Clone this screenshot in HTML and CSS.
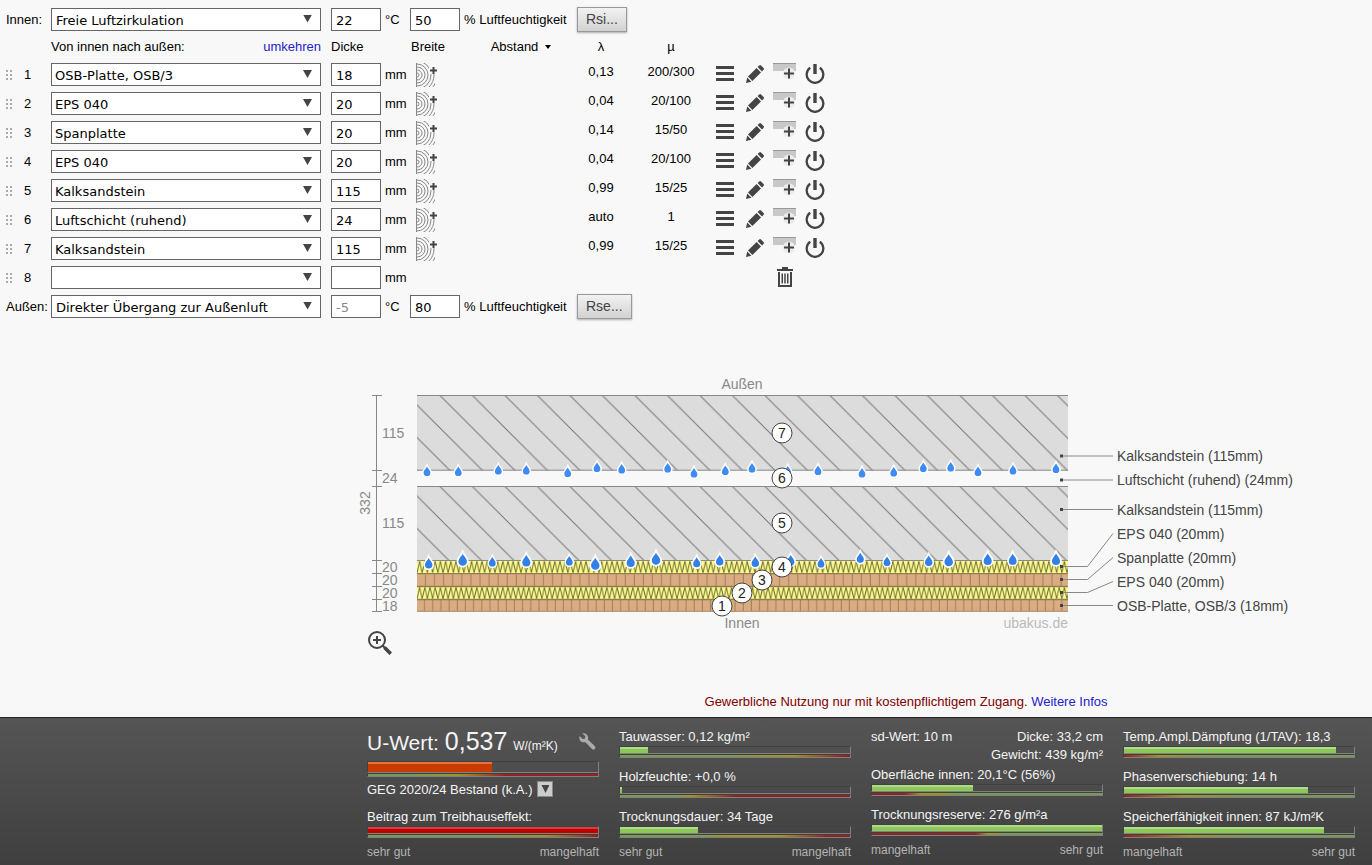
FILE: index.html
```html
<!DOCTYPE html>
<html lang="de">
<head>
    <meta charset="UTF-8">
    <meta name="viewport" content="width=device-width, initial-scale=1.0">
    <title>U-Wert-Rechner</title>
    <link rel="stylesheet" href="styles.css">
</head>
<body>
    <!-- Icon sprites -->
    <svg class="sprites" aria-hidden="true">
        <symbol id="i-grip" viewBox="0 0 6 10"><path d="M0 0h2v2H0zM4 0h2v2H4zM0 4h2v2H0zM4 4h2v2H4zM0 8h2v2H0zM4 8h2v2H4z"/></symbol>
        <symbol id="i-menu" viewBox="0 0 18 16"><path d="M0 0h18v3H0zM0 6h18v3H0zM0 12h18v3H0z"/></symbol>
        <symbol id="i-pen" viewBox="0 0 18 18"><path d="M0 18l1.2-5.4 4.2 4.2zM2 11.6L10.6 3l4.4 4.4L6.4 16zM11.6 2l1.6-1.6q.9-.8 1.8 0l2.6 2.6q.8.9 0 1.8L16 6.4z"/></symbol>
        <symbol id="i-insert" viewBox="0 0 24 22">
            <path fill="#c8c8c8" d="M0 1h23v7H0z"/><path fill="#999" d="M0 0h23v1H0z"/>
            <circle cx="16" cy="10.500" r="6" fill="#ececec"/><path d="M15 5.500h2v4h4v2h-4v4h-2v-4h-4v-2h4z"/>
        </symbol>
        <symbol id="i-power" viewBox="0 0 20 20"><path d="M8.300 0h3.400v10H8.300z"/><path fill="none" stroke="#444" stroke-width="2.300" d="M5.200 3.800a8.300 8.300 0 1 0 9.600 0"/></symbol>
        <symbol id="i-trash" viewBox="0 0 16 20"><path d="M0 2h5V0h6v2h5v2H0z"/><path fill="none" stroke="#444" stroke-width="2" d="M2 5v14h12V5"/><path d="M4.500 6.500h1.500v10H4.500zM7.250 6.500h1.500v10h-1.500zM10 6.500h1.500v10H10z"/></symbol>
        <symbol id="i-wood" viewBox="0 0 22 24">
            <clipPath id="wood-clip"><path d="M0 0h13v11h6v13H0z"/></clipPath>
            <g fill="none" stroke="#888" clip-path="url(#wood-clip)">
                <path d="M.5 0v24"/><circle cx="1" cy="12" r="2"/><circle cx="1" cy="12" r="5"/><circle cx="1" cy="12" r="8"/><circle cx="1" cy="12" r="11"/><circle cx="1" cy="12" r="14"/><circle cx="1" cy="12" r="17"/><circle cx="1" cy="12" r="20"/>
            </g>
            <path d="M16.500 4h2v2.500H21v2h-2.500V11h-2V8.500H14v-2h2.500z"/>
        </symbol>
        <symbol id="i-zoom" viewBox="0 0 24 24"><g fill="none" stroke="#444"><circle cx="9" cy="9" r="8" stroke-width="2"/><path stroke-width="2" d="M9 5v8M5 9h8"/><path stroke-width="2" d="M14.500 14.500l2.500 2.500"/><path stroke-width="3.600" d="M16.500 16.500l6.300 6.300"/></g></symbol>
        <symbol id="i-wrench" viewBox="0 0 17 17"><path d="M3.400.4l2.900 2.900-.4 2.200-2.200.5L.7 3C-.2 5.300.5 7.600 2.300 8.700c1.300.8 2.700.8 3.800.4l6.900 7c2 1.700 4.500-.8 2.900-2.900l-7-6.800c.5-1.300.3-2.900-.6-4.200C7.200.4 5.300-.2 3.400.400z"/></symbol>
    </svg>

    <main>
        <!-- Layer editor -->
        <form class="editor">
            <div class="climate">
                <label class="climate-label" for="innen">Innen:</label>
                <span class="drop"><select id="innen"><option>Freie Luftzirkulation</option></select></span>
                <input class="num" type="text" value="22" id="innenTemp"><label class="unit" for="innenTemp">°C</label>
                <input class="num" type="text" value="50" id="innenRh"><label class="unit humidity" for="innenRh">% Luftfeuchtigkeit</label>
                <button type="button" class="btn">Rsi...</button>
            </div>

            <table class="layers">
                <colgroup>
                    <col class="c-grip"><col class="c-no"><col class="c-material"><col class="c-thick"><col class="c-width"><col class="c-dist"><col class="c-lambda"><col class="c-mu"><col class="c-actions">
                </colgroup>
                <thead>
                    <tr>
                        <th></th><th></th>
                        <th><div class="head-material"><span>Von innen nach außen:</span><a href="#">umkehren</a></div></th>
                        <th>Dicke</th>
                        <th>Breite</th>
                        <th class="mid"><button type="button" class="sort">Abstand</button></th>
                        <th class="mid">λ</th>
                        <th class="mid">µ</th>
                        <th></th>
                    </tr>
                </thead>
                <tbody>
                    <tr>
                        <td><svg class="grip"><use href="#i-grip"/></svg></td><td class="no">1</td>
                        <td><span class="drop"><select aria-label="Schicht 1"><option>OSB-Platte, OSB/3</option></select></span></td>
                        <td><input class="num" type="text" value="18" id="d1"><label class="unit" for="d1">mm</label></td>
                        <td><button type="button" class="icon-btn" aria-label="Breite"><svg class="wood"><use href="#i-wood"/></svg></button></td><td></td>
                        <td class="val">0,13</td><td class="val">200/300</td>
                        <td><div class="actions">
                            <button type="button" class="icon-btn" aria-label="Menü"><svg class="menu"><use href="#i-menu"/></svg></button>
                            <button type="button" class="icon-btn" aria-label="Bearbeiten"><svg class="pen"><use href="#i-pen"/></svg></button>
                            <button type="button" class="icon-btn" aria-label="Einfügen"><svg class="insert"><use href="#i-insert"/></svg></button>
                            <button type="button" class="icon-btn" aria-label="Ein/Aus"><svg class="power"><use href="#i-power"/></svg></button>
                        </div></td>
                    </tr>
                    <tr>
                        <td><svg class="grip"><use href="#i-grip"/></svg></td><td class="no">2</td>
                        <td><span class="drop"><select aria-label="Schicht 2"><option>EPS 040</option></select></span></td>
                        <td><input class="num" type="text" value="20" id="d2"><label class="unit" for="d2">mm</label></td>
                        <td><button type="button" class="icon-btn" aria-label="Breite"><svg class="wood"><use href="#i-wood"/></svg></button></td><td></td>
                        <td class="val">0,04</td><td class="val">20/100</td>
                        <td><div class="actions">
                            <button type="button" class="icon-btn" aria-label="Menü"><svg class="menu"><use href="#i-menu"/></svg></button>
                            <button type="button" class="icon-btn" aria-label="Bearbeiten"><svg class="pen"><use href="#i-pen"/></svg></button>
                            <button type="button" class="icon-btn" aria-label="Einfügen"><svg class="insert"><use href="#i-insert"/></svg></button>
                            <button type="button" class="icon-btn" aria-label="Ein/Aus"><svg class="power"><use href="#i-power"/></svg></button>
                        </div></td>
                    </tr>
                    <tr>
                        <td><svg class="grip"><use href="#i-grip"/></svg></td><td class="no">3</td>
                        <td><span class="drop"><select aria-label="Schicht 3"><option>Spanplatte</option></select></span></td>
                        <td><input class="num" type="text" value="20" id="d3"><label class="unit" for="d3">mm</label></td>
                        <td><button type="button" class="icon-btn" aria-label="Breite"><svg class="wood"><use href="#i-wood"/></svg></button></td><td></td>
                        <td class="val">0,14</td><td class="val">15/50</td>
                        <td><div class="actions">
                            <button type="button" class="icon-btn" aria-label="Menü"><svg class="menu"><use href="#i-menu"/></svg></button>
                            <button type="button" class="icon-btn" aria-label="Bearbeiten"><svg class="pen"><use href="#i-pen"/></svg></button>
                            <button type="button" class="icon-btn" aria-label="Einfügen"><svg class="insert"><use href="#i-insert"/></svg></button>
                            <button type="button" class="icon-btn" aria-label="Ein/Aus"><svg class="power"><use href="#i-power"/></svg></button>
                        </div></td>
                    </tr>
                    <tr>
                        <td><svg class="grip"><use href="#i-grip"/></svg></td><td class="no">4</td>
                        <td><span class="drop"><select aria-label="Schicht 4"><option>EPS 040</option></select></span></td>
                        <td><input class="num" type="text" value="20" id="d4"><label class="unit" for="d4">mm</label></td>
                        <td><button type="button" class="icon-btn" aria-label="Breite"><svg class="wood"><use href="#i-wood"/></svg></button></td><td></td>
                        <td class="val">0,04</td><td class="val">20/100</td>
                        <td><div class="actions">
                            <button type="button" class="icon-btn" aria-label="Menü"><svg class="menu"><use href="#i-menu"/></svg></button>
                            <button type="button" class="icon-btn" aria-label="Bearbeiten"><svg class="pen"><use href="#i-pen"/></svg></button>
                            <button type="button" class="icon-btn" aria-label="Einfügen"><svg class="insert"><use href="#i-insert"/></svg></button>
                            <button type="button" class="icon-btn" aria-label="Ein/Aus"><svg class="power"><use href="#i-power"/></svg></button>
                        </div></td>
                    </tr>
                    <tr>
                        <td><svg class="grip"><use href="#i-grip"/></svg></td><td class="no">5</td>
                        <td><span class="drop"><select aria-label="Schicht 5"><option>Kalksandstein</option></select></span></td>
                        <td><input class="num" type="text" value="115" id="d5"><label class="unit" for="d5">mm</label></td>
                        <td><button type="button" class="icon-btn" aria-label="Breite"><svg class="wood"><use href="#i-wood"/></svg></button></td><td></td>
                        <td class="val">0,99</td><td class="val">15/25</td>
                        <td><div class="actions">
                            <button type="button" class="icon-btn" aria-label="Menü"><svg class="menu"><use href="#i-menu"/></svg></button>
                            <button type="button" class="icon-btn" aria-label="Bearbeiten"><svg class="pen"><use href="#i-pen"/></svg></button>
                            <button type="button" class="icon-btn" aria-label="Einfügen"><svg class="insert"><use href="#i-insert"/></svg></button>
                            <button type="button" class="icon-btn" aria-label="Ein/Aus"><svg class="power"><use href="#i-power"/></svg></button>
                        </div></td>
                    </tr>
                    <tr>
                        <td><svg class="grip"><use href="#i-grip"/></svg></td><td class="no">6</td>
                        <td><span class="drop"><select aria-label="Schicht 6"><option>Luftschicht (ruhend)</option></select></span></td>
                        <td><input class="num" type="text" value="24" id="d6"><label class="unit" for="d6">mm</label></td>
                        <td><button type="button" class="icon-btn" aria-label="Breite"><svg class="wood"><use href="#i-wood"/></svg></button></td><td></td>
                        <td class="val">auto</td><td class="val">1</td>
                        <td><div class="actions">
                            <button type="button" class="icon-btn" aria-label="Menü"><svg class="menu"><use href="#i-menu"/></svg></button>
                            <button type="button" class="icon-btn" aria-label="Bearbeiten"><svg class="pen"><use href="#i-pen"/></svg></button>
                            <button type="button" class="icon-btn" aria-label="Einfügen"><svg class="insert"><use href="#i-insert"/></svg></button>
                            <button type="button" class="icon-btn" aria-label="Ein/Aus"><svg class="power"><use href="#i-power"/></svg></button>
                        </div></td>
                    </tr>
                    <tr>
                        <td><svg class="grip"><use href="#i-grip"/></svg></td><td class="no">7</td>
                        <td><span class="drop"><select aria-label="Schicht 7"><option>Kalksandstein</option></select></span></td>
                        <td><input class="num" type="text" value="115" id="d7"><label class="unit" for="d7">mm</label></td>
                        <td><button type="button" class="icon-btn" aria-label="Breite"><svg class="wood"><use href="#i-wood"/></svg></button></td><td></td>
                        <td class="val">0,99</td><td class="val">15/25</td>
                        <td><div class="actions">
                            <button type="button" class="icon-btn" aria-label="Menü"><svg class="menu"><use href="#i-menu"/></svg></button>
                            <button type="button" class="icon-btn" aria-label="Bearbeiten"><svg class="pen"><use href="#i-pen"/></svg></button>
                            <button type="button" class="icon-btn" aria-label="Einfügen"><svg class="insert"><use href="#i-insert"/></svg></button>
                            <button type="button" class="icon-btn" aria-label="Ein/Aus"><svg class="power"><use href="#i-power"/></svg></button>
                        </div></td>
                    </tr>
                    <tr>
                        <td><svg class="grip"><use href="#i-grip"/></svg></td><td class="no">8</td>
                        <td><span class="drop"><select aria-label="Schicht 8"><option></option></select></span></td>
                        <td><input class="num" type="text" value="" id="d8"><label class="unit" for="d8">mm</label></td>
                        <td></td><td></td><td></td><td></td>
                        <td><div class="actions"><button type="button" class="icon-btn delete" aria-label="Löschen"><svg class="trash"><use href="#i-trash"/></svg></button></div></td>
                    </tr>
                </tbody>
            </table>

            <div class="climate">
                <label class="climate-label" for="aussen">Außen:</label>
                <span class="drop"><select id="aussen"><option>Direkter Übergang zur Außenluft</option></select></span>
                <input class="num muted" type="text" value="-5" id="aussenTemp"><label class="unit" for="aussenTemp">°C</label>
                <input class="num" type="text" value="80" id="aussenRh"><label class="unit humidity" for="aussenRh">% Luftfeuchtigkeit</label>
                <button type="button" class="btn">Rse...</button>
            </div>
        </form>

        <!-- Cross section of the wall -->
        <section class="section">
            <svg class="wall" viewBox="-61 -24 950 252" role="img" aria-label="Querschnitt">
                <defs>
                    <pattern id="stone" width="32.500" height="32.500" patternUnits="userSpaceOnUse" x="23" y="-.5">
                        <path stroke="#777" d="M-2-2l36.500 36.500M30.500-2l4 4M-2 30.500l4 4"/>
                    </pattern>
                    <pattern id="stone2" width="32.500" height="32.500" patternUnits="userSpaceOnUse" x="23" y="90.500">
                        <path stroke="#777" d="M-2-2l36.500 36.500M30.500-2l4 4M-2 30.500l4 4"/>
                    </pattern>
                    <pattern id="eps" width="5.200" height="13" patternUnits="userSpaceOnUse" x="0" y="164.500">
                        <path fill="none" stroke="#6f6b38" d="M0 12.500L2.600.5l2.600 12"/>
                    </pattern>
                    <pattern id="chip" width="9.080" height="13" patternUnits="userSpaceOnUse" x="0" y="177.500"><path stroke="#a08050" d="M8.500 0v13"/></pattern>
                    <pattern id="osb" width="8.170" height="13" patternUnits="userSpaceOnUse" x="0" y="203.500"><path stroke="#a08050" d="M7.600 0v13"/></pattern>
                    <path id="drop" d="M0-5C1-2.800 3.400-1.200 3.400 1.200a3.400 3.400 0 0 1-6.800 0C-3.400-1.200-1-2.800 0-5z"/>
                </defs>

                <g class="fills">
                    <path fill="#dcdcdc" d="M0-.5h651v75H0zM0 90.500h651v74H0z"/>
                    <path fill="url(#stone)" d="M0-.5h651v75H0z"/>
                    <path fill="url(#stone2)" d="M0 90.500h651v74H0z"/>
                    <path fill="#fbfb8c" d="M0 164.500h651v13H0zM0 190.500h651v13H0z"/>
                    <path fill="url(#eps)" d="M0 164.500h651v13H0zM0 190.500h651v13H0z"/>
                    <path fill="#dbab84" d="M0 177.500h651v13H0zM0 203.500h651v12H0z"/>
                    <path fill="url(#chip)" d="M0 177.500h651v13H0z"/>
                    <path fill="url(#osb)" d="M0 203.500h651v12H0z"/>
                </g>
                <g stroke="#888"><path d="M0-.5h651M0 74.200h651M0 90.500h651M0 164.500h651"/><path stroke="#8f7f50" stroke-width="1.300" d="M0 177.700h651M0 190.500h651M0 203.500h651"/><path stroke="#a98d6c" d="M0 215.300h651"/></g>

                <g class="drops">
                    <use href="#drop" x="10" y="75.500"/><use href="#drop" x="41.300" y="75.500"/><use href="#drop" x="81.300" y="74"/><use href="#drop" x="109.300" y="74"/><use href="#drop" x="150.700" y="76.500"/><use href="#drop" x="180" y="71.500"/><use href="#drop" x="204.700" y="73"/><use href="#drop" x="250.700" y="72"/><use href="#drop" x="277" y="77"/><use href="#drop" x="308.300" y="74.500"/><use href="#drop" x="335" y="72"/><use href="#drop" x="370.700" y="75"/><use href="#drop" x="401" y="74.500"/><use href="#drop" x="445" y="77"/><use href="#drop" x="476.700" y="76"/><use href="#drop" x="506.300" y="71.500"/><use href="#drop" x="533.700" y="71"/><use href="#drop" x="561" y="75.500"/><use href="#drop" x="596" y="74"/><use href="#drop" x="639" y="72.500"/>
                </g>
                <g class="drops wet">
                    <use href="#drop" transform="translate(11.700 167.500) scale(1.100)"/><use href="#drop" transform="translate(45.700 164) scale(1.250)"/><use href="#drop" transform="translate(75.300 166)"/><use href="#drop" transform="translate(109.300 165) scale(1.200)"/><use href="#drop" transform="translate(152.300 165)"/><use href="#drop" transform="translate(178.300 168) scale(1.250)"/><use href="#drop" transform="translate(213.700 165.500) scale(1.200)"/><use href="#drop" transform="translate(239 163) scale(1.250)"/><use href="#drop" transform="translate(279.700 166.500) scale(1.050)"/><use href="#drop" transform="translate(302.700 164.500) scale(1.100)"/><use href="#drop" transform="translate(338.300 166) scale(1.100)"/><use href="#drop" transform="translate(373.700 164.500) scale(1.100)"/><use href="#drop" transform="translate(404 167)"/><use href="#drop" transform="translate(443.300 162) scale(1.050)"/><use href="#drop" transform="translate(470 165.500)"/><use href="#drop" transform="translate(511.700 165) scale(1.100)"/><use href="#drop" transform="translate(531.700 164.500) scale(1.250)"/><use href="#drop" transform="translate(570.700 163.500) scale(1.200)"/><use href="#drop" transform="translate(595.700 163.500) scale(1.150)"/><use href="#drop" transform="translate(639 163.500) scale(1.200)"/>
                </g>

                <!-- dimensions on the left -->
                <path stroke="#888" d="M-40.500-.5v216M-45-.5h10M-45 74.500h10M-45 90.500h10M-45 164.500h10M-45 177.500h10M-45 190.500h10M-45 203.500h10M-45 215.500h10"/>
                <g class="dim">
                    <text x="-35" y="42">115</text><text x="-35" y="87">24</text><text x="-35" y="132">115</text><text x="-35" y="176">20</text><text x="-35" y="189">20</text><text x="-35" y="202">20</text><text x="-35" y="215">18</text>
                    <text class="center" transform="translate(-47 107) rotate(-90)">332</text>
                    <text class="center" x="325" y="-7">Außen</text><text class="center" x="325" y="232">Innen</text>
                    <text class="brand" x="651" y="232">ubakus.de</text>
                </g>

                <g class="badges">
                    <circle cx="365" cy="37" r="10"/><text x="365" y="42">7</text>
                    <circle cx="365" cy="82" r="10"/><text x="365" y="87">6</text>
                    <circle cx="365" cy="127" r="10"/><text x="365" y="132">5</text>
                    <circle cx="365" cy="171" r="10"/><text x="365" y="176">4</text>
                    <circle cx="345" cy="184" r="10"/><text x="345" y="189">3</text>
                    <circle cx="325" cy="197" r="10"/><text x="325" y="202">2</text>
                    <circle cx="305" cy="210" r="10"/><text x="305" y="215">1</text>
                </g>

                <!-- leader lines and layer names -->
                <path class="leader" d="M644 60h52M644 84h52M644 113.500h52M644 170.500h26.500L696 137.500M644 183.500h26.500L696 161.500M644 196.500h26.500L696 185.500M644 209.500h52"/>
                <path d="M643 58.500h3v3h-3zM643 82.500h3v3h-3zM643 112h3v3h-3zM643 169h3v3h-3zM643 182h3v3h-3zM643 195h3v3h-3zM643 208h3v3h-3z" fill="#444"/>
                <g class="names">
                    <text x="700" y="65">Kalksandstein (115mm)</text><text x="700" y="89">Luftschicht (ruhend) (24mm)</text><text x="700" y="119">Kalksandstein (115mm)</text><text x="700" y="143">EPS 040 (20mm)</text><text x="700" y="167">Spanplatte (20mm)</text><text x="700" y="191">EPS 040 (20mm)</text><text x="700" y="215">OSB-Platte, OSB/3 (18mm)</text>
                </g>
            </svg>
            <button type="button" class="icon-btn" aria-label="Vergrößern"><svg class="magnify"><use href="#i-zoom"/></svg></button>
        </section>
    </main>

    <p class="notice">Gewerbliche Nutzung nur mit kostenpflichtigem Zugang. <a href="#">Weitere Infos</a></p>

    <!-- Results -->
    <footer class="results">
        <div class="col">
            <div class="uvalue"><span class="u-label">U-Wert: <b>0,537</b> <small>W/(m²K)</small></span><button type="button" class="icon-btn" aria-label="Einstellungen"><svg class="wrench"><use href="#i-wrench"/></svg></button></div>
            <div class="bar tall"><div class="fill orange" style="width: 54%"></div></div>
            <div class="scale s-uvalue"></div>
            <div class="geg">GEG 2020/24 Bestand (k.A.)<button type="button" class="mini" aria-label="Auswahl"></button></div>
            <div class="metric"><div class="name">Beitrag zum Treibhauseffekt:</div><div class="bar"><div class="fill red" style="width: 100%"></div></div><div class="scale s-co2"></div></div>
            <div class="legend"><span>sehr gut</span><span>mangelhaft</span></div>
        </div>
        <div class="col">
            <div class="metric"><div class="name">Tauwasser: 0,12 kg/m²</div><div class="bar"><div class="fill" style="width: 12%"></div></div><div class="scale s-dew"></div></div>
            <div class="metric"><div class="name">Holzfeuchte: +0,0 %</div><div class="bar"><div class="fill" style="width: 1%"></div></div><div class="scale s-wood"></div></div>
            <div class="metric"><div class="name">Trocknungsdauer: 34 Tage</div><div class="bar"><div class="fill" style="width: 34%"></div></div><div class="scale s-dry"></div></div>
            <div class="legend"><span>sehr gut</span><span>mangelhaft</span></div>
        </div>
        <div class="col">
            <div class="facts"><span>sd-Wert: 10 m</span><span>Dicke: 33,2 cm<br>Gewicht: 439 kg/m²</span></div>
            <div class="metric"><div class="name">Oberfläche innen: 20,1°C (56%)</div><div class="bar"><div class="fill" style="width: 44%"></div></div><div class="scale s-surface"></div></div>
            <div class="metric"><div class="name">Trocknungsreserve: 276 g/m²a</div><div class="bar"><div class="fill" style="width: 100%"></div></div><div class="scale s-reserve"></div></div>
            <div class="legend"><span>mangelhaft</span><span>sehr gut</span></div>
        </div>
        <div class="col">
            <div class="metric"><div class="name">Temp.Ampl.Dämpfung (1/TAV): 18,3</div><div class="bar"><div class="fill" style="width: 92%"></div></div><div class="scale s-tav"></div></div>
            <div class="metric"><div class="name">Phasenverschiebung: 14 h</div><div class="bar"><div class="fill" style="width: 80%"></div></div><div class="scale s-phase"></div></div>
            <div class="metric"><div class="name">Speicherfähigkeit innen: 87 kJ/m²K</div><div class="bar"><div class="fill" style="width: 87%"></div></div><div class="scale s-heat"></div></div>
            <div class="legend"><span>mangelhaft</span><span>sehr gut</span></div>
        </div>
    </footer>
</body>
</html>
```
FILE: styles.css
```css
* {
    box-sizing: border-box;
}

body {
    margin: 0;
    min-height: 100vh;
    display: flex;
    flex-direction: column;
    background: #f8f8f8;
    color: #000;
    font-family: "Liberation Sans", Arial, sans-serif;
    font-size: 13px;
}

a {
    color: #2222cc;
    text-decoration: none;
}

svg {
    display: block;
    fill: #444;
}

.sprites {
    position: absolute;
    width: 0;
    height: 0;
}

.icon-btn {
    padding: 0;
    border: none;
    background: none;
    cursor: pointer;
}

/* Layer editor */
.editor {
    padding: 7px 4px 0;
}

.climate {
    display: flex;
    align-items: center;
    height: 24px;
    padding-left: 2px;
}

.climate-label {
    width: 45px;
}

.drop {
    position: relative;
    display: block;
    width: 270px;
}

.drop::after {
    content: "";
    position: absolute;
    right: 9px;
    top: 7px;
    width: 9px;
    height: 8px;
    background: #444;
    clip-path: polygon(0 0, 100% 0, 50% 100%);
    pointer-events: none;
}

.drop select,
.num {
    display: block;
    height: 23px;
    border: 1px solid #666;
    border-radius: 0;
    background: #fff;
    color: #000;
    font: 13px "DejaVu Sans", Verdana, sans-serif;
    appearance: none;
}

.drop select {
    width: 100%;
    padding: 2px 20px 0 3px;
}

.climate select {
    padding-left: 4px;
}

.num {
    width: 50px;
    padding: 2px 4px 0;
}

.num.muted {
    color: #888;
}

.climate .num {
    margin-left: 10px;
}

.unit {
    padding-left: 4px;
}

.climate .unit {
    width: 19px;
}

.climate .unit.humidity {
    width: 117px;
}

.btn {
    height: 25px;
    padding: 0 8px;
    border: 1px solid #999;
    background: linear-gradient(#f2f2f2, #d2d2d2);
    box-shadow: 0 1px 2px rgba(0, 0, 0, 0.3);
    color: #444;
    font: 14px "Liberation Sans", Arial, sans-serif;
}

.layers {
    width: 826px;
    margin: 3px 0 2px;
    border-collapse: collapse;
    table-layout: fixed;
}

.c-grip { width: 20px; }
.c-no { width: 27px; }
.c-material { width: 280px; }
.c-thick { width: 80px; }
.c-width { width: 61px; }
.c-dist { width: 98px; }
.c-lambda { width: 62px; }
.c-mu { width: 78px; }
.c-actions { width: 120px; }

.layers th {
    height: 26px;
    padding: 0;
    font-weight: normal;
    text-align: left;
    line-height: 26px;
    vertical-align: top;
}

.layers .mid {
    text-align: center;
}

.layers td {
    height: 29px;
    padding: 0;
}

.layers td .num,
.layers td .unit {
    display: inline-block;
    vertical-align: middle;
}

.layers td .icon-btn {
    display: block;
}

.head-material {
    display: flex;
    justify-content: space-between;
    padding-right: 10px;
}

.sort {
    padding: 0;
    border: none;
    background: none;
    font: inherit;
}

.sort::after {
    content: "";
    display: inline-block;
    margin-left: 7px;
    border: 3px solid transparent;
    border-top: 4px solid #000;
    border-bottom: 0;
    vertical-align: 2px;
}

.layers .val {
    line-height: 24px;
    text-align: center;
    vertical-align: top;
}

.grip {
    width: 6px;
    height: 10px;
    margin-left: 2px;
    fill: #aaa;
}

.wood {
    width: 22px;
    height: 24px;
    margin-left: 5px;
}

.actions {
    display: grid;
    grid-template-columns: repeat(4, 30px);
    align-items: center;
    height: 29px;
    padding-bottom: 2px;
}

.actions .icon-btn {
    justify-self: center;
}

.actions .delete {
    grid-column: 3;
}

.menu { width: 18px; height: 16px; }
.pen { width: 18px; height: 18px; }
.insert { width: 24px; height: 22px; }
.power { width: 20px; height: 20px; }
.trash { width: 16px; height: 20px; }
.magnify { width: 24px; height: 24px; }
.wrench { width: 17px; height: 17px; fill: #aaa; }

/* Cross section */
.section {
    padding: 54px 12px 0 356px;
}

.section .icon-btn {
    display: block;
    margin: 7px 0 0 12px;
}

.wall {
    width: 100%;
    max-width: 950px;
    overflow: visible;
    font-size: 14px;
}

.drops {
    fill: #3d8bf5;
    stroke: #fff;
    stroke-width: 3px;
    paint-order: stroke;
}

.drops.wet {
    fill: #3380e8;
}

.dim {
    fill: #888;
}

.center,
.badges text {
    text-anchor: middle;
}

.brand {
    fill: #bbb;
    text-anchor: end;
}

.badges circle {
    fill: #fff;
    stroke: #444;
}

.badges text {
    fill: #222;
}

.leader {
    fill: none;
    stroke: #888;
}

.names {
    fill: #444;
}

.notice {
    margin: auto 0 0 440px;
    padding-bottom: 5px;
    color: #800000;
    line-height: 20px;
    text-align: center;
}

/* Results */
.results {
    display: grid;
    grid-template-columns: repeat(4, 1fr);
    gap: 20px;
    padding: 8px 17px 3px 367px;
    border-top: 1px solid #222;
    background: linear-gradient(#555, #3f3f3f);
    color: #f4f4f4;
}

.metric {
    margin-bottom: 8px;
}

.name {
    padding-top: 2px;
    line-height: 18px;
    white-space: nowrap;
}

.bar {
    height: 8px;
    border: 1px solid #808080;
    border-top-color: #404040;
    border-left-color: #404040;
}

.bar.tall {
    height: 12px;
}

.fill {
    height: 100%;
    border-top: 2px solid #b1da8c;
    background: #8bc857;
}

.fill.orange {
    border-color: #e57440;
    background: #c83c00;
}

.fill.red {
    border-color: #d84040;
    background: #c00000;
}

.scale {
    height: 4px;
    border: 1px solid #808080;
    border-top-color: #404040;
    border-left-color: #404040;
}

.s-uvalue { background: linear-gradient(90deg, #789a54 20%, #a39124 40%, #932222 60%); }
.s-co2 { background: linear-gradient(90deg, #789a54 45%, #a39124 77%, #932222); }
.s-dew { background: linear-gradient(90deg, #789a54 45%, #a39124 75%, #932222 98%); }
.s-wood { background: linear-gradient(90deg, #789a54 23%, #a39124 31%, #932222 50%); }
.s-dry { background: linear-gradient(90deg, #789a54 35%, #a39124 45%, #a39124 70%, #932222 90%); }
.s-surface { background: linear-gradient(90deg, #932222 14%, #a39124 21%, #a39124 29%, #789a54 38%); }
.s-reserve { background: linear-gradient(90deg, #932222 45%, #a39124 50%, #789a54 58%); }
.s-tav { background: linear-gradient(90deg, #932222, #a39124 15%, #789a54 40%); }
.s-phase { background: linear-gradient(90deg, #932222, #a39124 25%, #789a54 55%); }
.s-heat { background: linear-gradient(90deg, #932222, #a39124 28%, #789a54 58%); }

.uvalue {
    display: flex;
    align-items: center;
    justify-content: space-between;
    height: 35px;
    padding: 0 3px 5px 0;
}

.u-label {
    font-size: 21px;
    white-space: nowrap;
}

.u-label b {
    font-size: 25px;
    font-weight: normal;
}

.u-label small {
    font-size: 12px;
}

.geg {
    display: flex;
    align-items: center;
    gap: 5px;
    height: 24px;
    margin-bottom: 5px;
}

.mini {
    width: 16px;
    height: 16px;
    padding: 3px;
    border: 1px solid #888;
    background: #ccc;
}

.mini::before {
    content: "";
    display: block;
    width: 8px;
    height: 8px;
    background: #444;
    clip-path: polygon(0 0, 100% 0, 50% 100%);
}

.facts {
    display: flex;
    justify-content: space-between;
    padding-top: 2px;
    line-height: 18px;
    text-align: right;
}

.legend {
    display: flex;
    justify-content: space-between;
    margin-top: -4px;
    color: #b4b4b4;
    font-size: 12px;
    line-height: 20px;
}
```
